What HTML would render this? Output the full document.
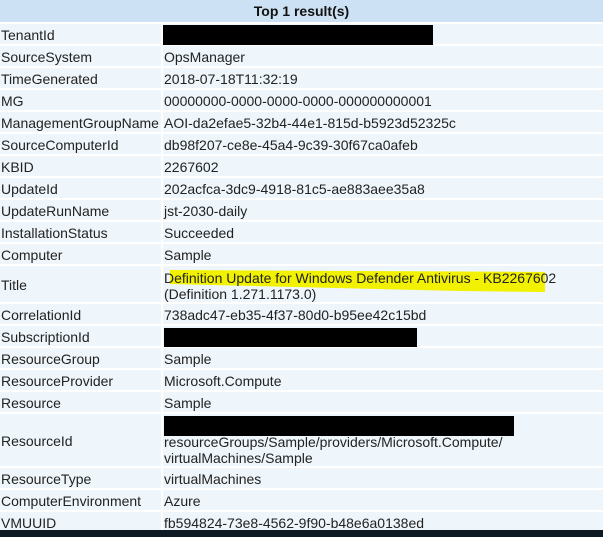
<!DOCTYPE html>
<html><head><style>
*{margin:0;padding:0;box-sizing:border-box}
body{width:603px;height:537px;background:#fff;position:relative;overflow:hidden;font-family:"Liberation Sans",Arial,sans-serif;font-size:14px;color:#222}
.h{position:absolute;left:0;top:0;width:603px;height:22px;background:#cde1f4;text-align:center;font-weight:bold;line-height:23px;color:#111}
.r{position:absolute;left:0;width:603px}
.k,.v{position:absolute;top:0;bottom:0;background:#eef6fb;display:flex;align-items:center;padding-top:2px}
.k{left:0;width:161px;padding-left:1px}
.v{left:163px;right:0;padding-left:1px;line-height:16px}
.b{position:absolute;background:#000}
</style></head><body>
<div class="h">Top 1 result(s)</div>
<div class="r" style="top:24px;height:20px"><div class="k">TenantId</div><div class="v"></div></div>
<div class="r" style="top:46px;height:20px"><div class="k">SourceSystem</div><div class="v">OpsManager</div></div>
<div class="r" style="top:68px;height:20px"><div class="k">TimeGenerated</div><div class="v">2018-07-18T11:32:19</div></div>
<div class="r" style="top:90px;height:20px"><div class="k">MG</div><div class="v">00000000-0000-0000-0000-000000000001</div></div>
<div class="r" style="top:112px;height:20px"><div class="k">ManagementGroupName</div><div class="v">AOI-da2efae5-32b4-44e1-815d-b5923d52325c</div></div>
<div class="r" style="top:134px;height:20px"><div class="k">SourceComputerId</div><div class="v">db98f207-ce8e-45a4-9c39-30f67ca0afeb</div></div>
<div class="r" style="top:156px;height:20px"><div class="k">KBID</div><div class="v">2267602</div></div>
<div class="r" style="top:178px;height:20px"><div class="k">UpdateId</div><div class="v">202acfca-3dc9-4918-81c5-ae883aee35a8</div></div>
<div class="r" style="top:200px;height:20px"><div class="k">UpdateRunName</div><div class="v">jst-2030-daily</div></div>
<div class="r" style="top:222px;height:20px"><div class="k">InstallationStatus</div><div class="v">Succeeded</div></div>
<div class="r" style="top:244px;height:20px"><div class="k">Computer</div><div class="v">Sample</div></div>
<div class="r" style="top:266px;height:36px"><div class="k">Title</div><div class="v"></div></div>
<svg style="position:absolute;left:0;top:0" width="603" height="537"><polygon points="170,270 545,272 545,292 460,291 170,284" fill="#f2f200"/></svg>
<div style="position:absolute;left:164px;top:270px;line-height:16px;width:420px">Definition Update for Windows Defender Antivirus - KB2267602<br>(Definition 1.271.1173.0)</div>
<div class="r" style="top:304px;height:20px"><div class="k">CorrelationId</div><div class="v">738adc47-eb35-4f37-80d0-b95ee42c15bd</div></div>
<div class="r" style="top:326px;height:20px"><div class="k">SubscriptionId</div><div class="v"></div></div>
<div class="r" style="top:348px;height:20px"><div class="k">ResourceGroup</div><div class="v">Sample</div></div>
<div class="r" style="top:370px;height:20px"><div class="k">ResourceProvider</div><div class="v">Microsoft.Compute</div></div>
<div class="r" style="top:392px;height:20px"><div class="k">Resource</div><div class="v">Sample</div></div>
<div class="r" style="top:414px;height:52px"><div class="k">ResourceId</div><div class="v" style="align-items:flex-end;padding-bottom:0">resourceGroups/Sample/providers/Microsoft.Compute/<br>virtualMachines/Sample</div></div>
<div class="r" style="top:468px;height:20px"><div class="k">ResourceType</div><div class="v">virtualMachines</div></div>
<div class="r" style="top:490px;height:20px"><div class="k">ComputerEnvironment</div><div class="v">Azure</div></div>
<div class="r" style="top:512px;height:20px"><div class="k">VMUUID</div><div class="v">fb594824-73e8-4562-9f90-b48e6a0138ed</div></div>
<div class="b" style="left:163px;top:25px;width:270px;height:20px"></div>
<div class="b" style="left:164px;top:328px;width:253px;height:19px"></div>
<div class="b" style="left:164px;top:416px;width:350px;height:20px"></div>
<div style="position:absolute;left:0;top:530px;width:603px;height:7px;background:#0d1a24"></div>
</body></html>
